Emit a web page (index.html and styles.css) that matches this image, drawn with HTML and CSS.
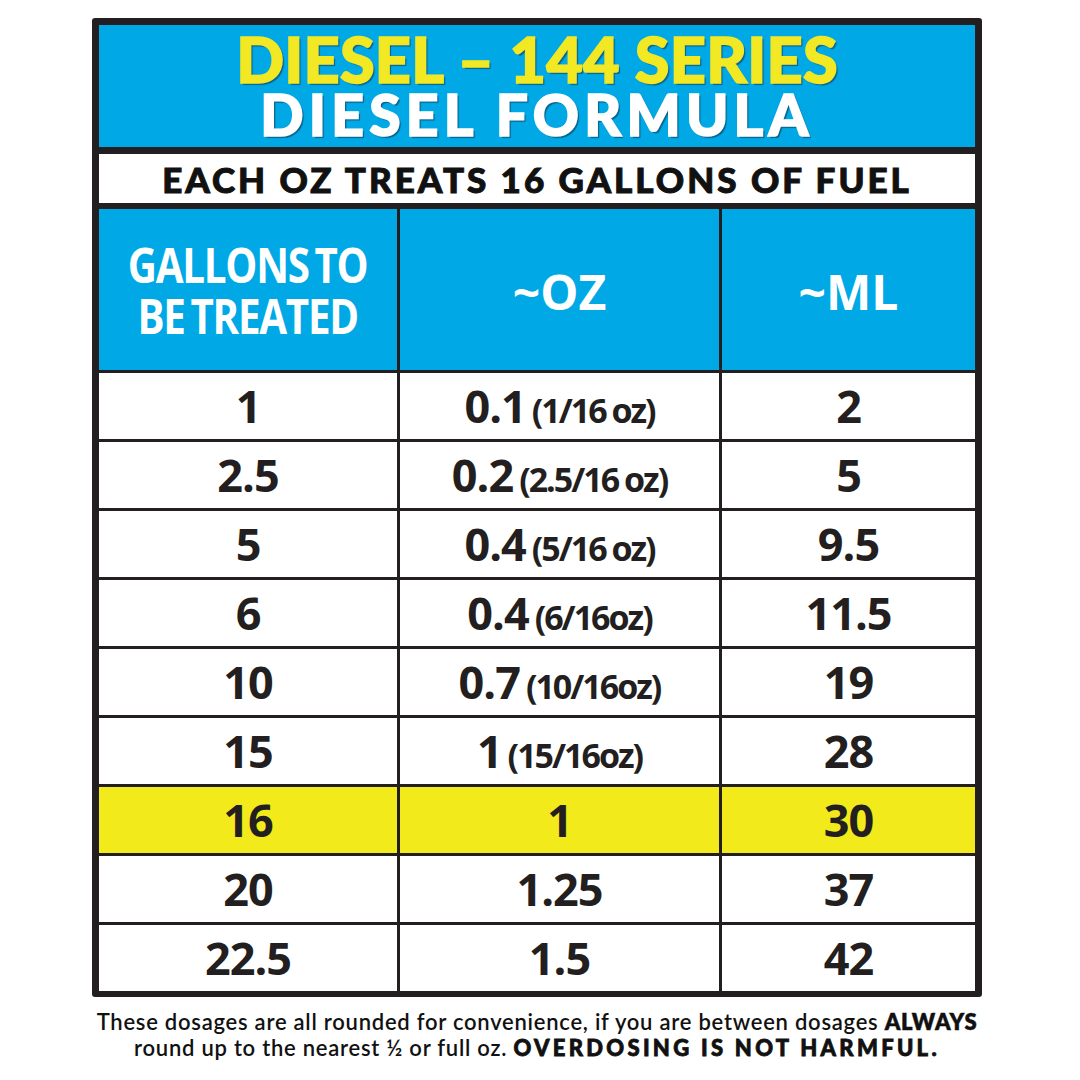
FILE: index.html
```html
<!DOCTYPE html>
<html>
<head>
<meta charset="utf-8">
<link rel="stylesheet" href="styles.css">
</head>
<body>
<div class="page">
  <div class="chart">
    <div class="title">
      <div class="title-line1">DIESEL – 144 SERIES</div>
      <div class="title-line2">DIESEL FORMULA</div>
    </div>
    <div class="subtitle">EACH OZ TREATS 16 GALLONS OF FUEL</div>
    <div class="grid">
      <div class="cell head"><span class="head-gallons">GALLONS TO<br>BE TREATED</span></div>
      <div class="cell head">~OZ</div>
      <div class="cell head">~ML</div>

      <div class="cell">1</div>
      <div class="cell">0.1<span class="frac">(1/16 oz)</span></div>
      <div class="cell">2</div>

      <div class="cell">2.5</div>
      <div class="cell">0.2<span class="frac">(2.5/16 oz)</span></div>
      <div class="cell">5</div>

      <div class="cell">5</div>
      <div class="cell">0.4<span class="frac">(5/16 oz)</span></div>
      <div class="cell">9.5</div>

      <div class="cell">6</div>
      <div class="cell">0.4<span class="frac">(6/16oz)</span></div>
      <div class="cell">11.5</div>

      <div class="cell">10</div>
      <div class="cell">0.7<span class="frac">(10/16oz)</span></div>
      <div class="cell">19</div>

      <div class="cell">15</div>
      <div class="cell">1<span class="frac">(15/16oz)</span></div>
      <div class="cell">28</div>

      <div class="cell hl">16</div>
      <div class="cell hl">1</div>
      <div class="cell hl">30</div>

      <div class="cell">20</div>
      <div class="cell">1.25</div>
      <div class="cell">37</div>

      <div class="cell">22.5</div>
      <div class="cell">1.5</div>
      <div class="cell">42</div>
    </div>
  </div>
  <p class="note">These dosages are all rounded for convenience, if you are between dosages <b class="strong">ALWAYS</b><br>round up to the nearest ½ or full oz. <b class="heavy">OVERDOSING IS NOT HARMFUL.</b></p>
</div>
</body>
</html>
```

FILE: styles.css
```css
html, body {
  margin: 0;
  padding: 0;
  background: #ffffff;
}

.page {
  width: 1080px;
  height: 1080px;
  padding: 18px 0 0 92px;
  box-sizing: border-box;
}

.chart {
  width: 890px;
  box-sizing: border-box;
  border: 7px solid #231f20;
  border-bottom-width: 6px;
  border-radius: 3px;
  background: #231f20;
  display: flex;
  flex-direction: column;
}

.title {
  height: 122px;
  background: #00a9e6;
  display: flex;
  flex-direction: column;
  align-items: center;
  box-sizing: border-box;
  padding-top: 6px;
  font-family: Lato, "DejaVu Sans", sans-serif;
  font-weight: 900;
  text-shadow: 2px 2px 1px rgba(20, 40, 70, 0.55);
}

.title-line1 {
  color: #f2e823;
  font-size: 63px;
  line-height: 55px;
  letter-spacing: 0.2px;
  -webkit-text-stroke: 1.6px #f2e823;
}

.title-line2 {
  color: #ffffff;
  font-size: 57px;
  line-height: 57px;
  letter-spacing: 5.2px;
  -webkit-text-stroke: 1.6px #ffffff;
}

.subtitle {
  margin-top: 7px;
  height: 49px;
  background: #ffffff;
  display: flex;
  align-items: center;
  justify-content: center;
  font-family: Lato, "DejaVu Sans", sans-serif;
  font-weight: 900;
  font-size: 35px;
  line-height: 1;
  letter-spacing: 3px;
  -webkit-text-stroke: 1px #111111;
  color: #111111;
  padding-top: 2px;
  box-sizing: border-box;
}

.grid {
  margin-top: 6px;
  display: grid;
  grid-template-columns: 298px 319px 253px;
  grid-template-rows: 161px repeat(9, 66px);
  column-gap: 3px;
  row-gap: 3px;
}

.cell {
  background: #ffffff;
  text-align: center;
  white-space: nowrap;
  font-family: "Open Sans", "Noto Sans", sans-serif;
  font-weight: 700;
  font-size: 45px;
  color: #231f20;
  line-height: 66px;
  letter-spacing: -1px;
}

.cell.hl {
  background: #f2ea1b;
}

.head {
  background: #00a9e6;
  color: #ffffff;
  font-size: 48px;
  letter-spacing: 0;
  display: flex;
  align-items: center;
  justify-content: center;
  line-height: 1;
  padding-top: 4px;
}

.head-gallons {
  display: inline-block;
  font-size: 48px;
  line-height: 51px;
  letter-spacing: -1.5px;
  word-spacing: -4px;
  text-align: center;
  transform: scaleX(0.84);
  margin-top: -4px;
}

.frac {
  font-size: 34px;
  letter-spacing: -2px;
  word-spacing: -1px;
  margin-left: 6px;
}

.note {
  margin: 12px 0 0 0;
  width: 890px;
  text-align: center;
  font-family: Lato, "DejaVu Sans", sans-serif;
  font-weight: 600;
  font-size: 22px;
  line-height: 26px;
  letter-spacing: 0.75px;
  color: #111111;
}

.strong {
  font-weight: 800;
  -webkit-text-stroke: 0.4px #111111;
}

.heavy {
  font-weight: 900;
  letter-spacing: 3.3px;
  -webkit-text-stroke: 0.8px #111111;
}
```
